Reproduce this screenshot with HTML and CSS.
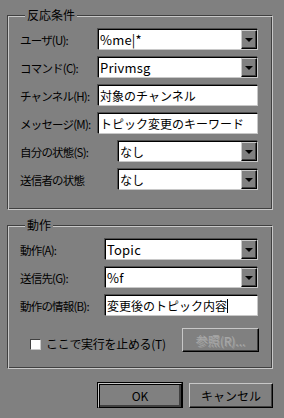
FILE: index.html
```html
<!DOCTYPE html>
<html lang="ja">
<head>
    <meta charset="UTF-8">
    <title>反応条件</title>
    <link rel="stylesheet" href="styles.css">
</head>
<body>
    <fieldset class="group">
        <legend>反応条件</legend>
        <div class="row">
            <span class="label w78">ユーザ(U):</span>
            <div class="field"><span class="value latin">%me|*</span><span class="drop"></span></div>
        </div>
        <div class="row">
            <span class="label w78">コマンド(C):</span>
            <div class="field"><span class="value latin">Privmsg</span><span class="drop"></span></div>
        </div>
        <div class="row">
            <span class="label w78">チャンネル(H):</span>
            <div class="field"><span class="value">対象のチャンネル</span></div>
        </div>
        <div class="row">
            <span class="label w78">メッセージ(M):</span>
            <div class="field"><span class="value">トピック変更のキーワード</span></div>
        </div>
        <div class="row">
            <span class="label w98">自分の状態(S):</span>
            <div class="field"><span class="value">なし</span><span class="drop"></span></div>
        </div>
        <div class="row">
            <span class="label w98">送信者の状態</span>
            <div class="field"><span class="value">なし</span><span class="drop"></span></div>
        </div>
    </fieldset>

    <fieldset class="group second">
        <legend>動作</legend>
        <div class="row">
            <span class="label w85">動作(A):</span>
            <div class="field"><span class="value latin">Topic</span><span class="drop"></span></div>
        </div>
        <div class="row">
            <span class="label w85">送信先(G):</span>
            <div class="field"><span class="value latin">%f</span><span class="drop"></span></div>
        </div>
        <div class="row">
            <span class="label w85">動作の情報(B):</span>
            <div class="field"><span class="value">変更後のトピック内容<span class="caret"></span></span></div>
        </div>
        <div class="check-row">
            <label class="check"><span class="box"></span>ここで実行を止める(T)</label>
            <button class="btn browse" disabled>参照(R)...</button>
        </div>
    </fieldset>

    <div class="actions">
        <button class="btn default">OK</button>
        <button class="btn">キャンセル</button>
    </div>
</body>
</html>
```

FILE: styles.css
```css
body {
    margin: 0;
    background: #808080;
    font-family: "Noto Sans CJK JP", sans-serif;
    font-size: 12px;
    color: #000;
}

.group {
    box-sizing: border-box;
    width: 266px;
    margin: 8px 0 0 7px;
    padding: 7px 14px 12px 12px;
    border: 1px solid;
    border-color: #404040 #c8c8c8 #c8c8c8 #404040;
    box-shadow: inset 1px 1px 0 #c8c8c8, inset -1px -1px 0 #404040;
}

.second {
    padding-bottom: 16px;
}

.group legend {
    background: #808080;
    padding: 0 2px;
    margin-left: 5px;
    line-height: 14px;
    font-size: 12px;
}

.row {
    display: flex;
    align-items: center;
    height: 21px;
    margin-bottom: 7px;
}

.label {
    flex: none;
    white-space: nowrap;
    font-size: 11.5px;
    line-height: 14px;
    letter-spacing: -0.8px;
}

.w78 { width: 78px; }
.w85 { width: 85px; }
.w98 { width: 98px; }

.field {
    flex: 1;
    display: flex;
    height: 21px;
    box-sizing: border-box;
    background: #fff;
    border: 1px solid;
    border-color: #000 #c8c8c8 #c8c8c8 #000;
    box-shadow: -1px -1px 0 #505050;
}

.value {
    flex: 1;
    padding-left: 1px;
    font-size: 12px;
    line-height: 19px;
    white-space: nowrap;
    overflow: hidden;
}

.value.latin {
    font-size: 13px;
    letter-spacing: 0.2px;
}

.caret {
    display: inline-block;
    width: 1px;
    height: 14px;
    background: #000;
    vertical-align: -2px;
}

.drop {
    flex: none;
    width: 16px;
    box-sizing: border-box;
    background: #808080;
    border: 1px solid;
    border-color: #c8c8c8 #000 #000 #c8c8c8;
    box-shadow: inset -1px -1px 0 #404040;
    display: flex;
    align-items: center;
    justify-content: center;
}

.drop::before {
    content: "";
    border-left: 4px solid transparent;
    border-right: 4px solid transparent;
    border-top: 4px solid #000;
    margin-left: -1px;
}

.check-row {
    display: flex;
    align-items: center;
    justify-content: space-between;
    margin-top: 12px;
}

.check {
    display: flex;
    align-items: center;
    gap: 5px;
    margin-left: 10px;
    margin-top: 8px;
    line-height: 14px;
    letter-spacing: -0.3px;
}

.box {
    width: 11px;
    height: 11px;
    box-sizing: border-box;
    background: #fff;
    border: 1px solid;
    border-color: #404040 #c8c8c8 #c8c8c8 #404040;
}

.btn {
    font-family: inherit;
    font-size: 12px;
    background: #808080;
    color: #000;
    padding: 0;
    box-sizing: border-box;
    border: 1px solid;
    border-color: #c8c8c8 #000 #000 #c8c8c8;
    box-shadow: inset -1px -1px 0 #404040;
}

.browse {
    width: 77px;
    height: 24px;
    margin-right: -1px;
    color: #a8a8a8;
    text-shadow: 1px 1px 0 #9a9a9a;
}

.actions {
    display: flex;
    justify-content: flex-end;
    gap: 7px;
    margin-top: 14px;
    padding-right: 11px;
}

.actions .btn {
    width: 84px;
    height: 25px;
}

.btn.default {
    outline: 1px solid #000;
    outline-offset: 0;
    border-color: #c8c8c8 #000 #000 #c8c8c8;
    box-shadow: inset 1px 1px 0 #000, inset -2px -2px 0 #404040;
}
```
